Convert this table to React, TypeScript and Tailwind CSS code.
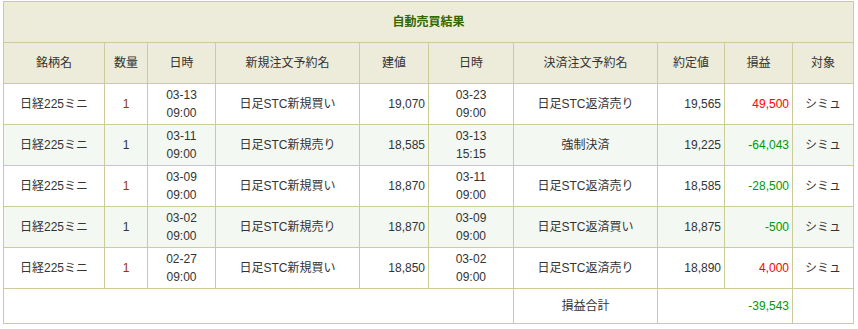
import React from "react";

type Row = {
  qtyBuy: boolean;
  d1: string;
  t1: string;
  open: string;
  price: string;
  d2: string;
  t2: string;
  close: string;
  fill: string;
  pl: string;
  plPos: boolean;
};

const rows: Row[] = [
  { qtyBuy: true, d1: "03-13", t1: "09:00", open: "日足STC新規買い", price: "19,070", d2: "03-23", t2: "09:00", close: "日足STC返済売り", fill: "19,565", pl: "49,500", plPos: true },
  { qtyBuy: false, d1: "03-11", t1: "09:00", open: "日足STC新規売り", price: "18,585", d2: "03-13", t2: "15:15", close: "強制決済", fill: "19,225", pl: "-64,043", plPos: false },
  { qtyBuy: true, d1: "03-09", t1: "09:00", open: "日足STC新規買い", price: "18,870", d2: "03-11", t2: "09:00", close: "日足STC返済売り", fill: "18,585", pl: "-28,500", plPos: false },
  { qtyBuy: false, d1: "03-02", t1: "09:00", open: "日足STC新規売り", price: "18,870", d2: "03-09", t2: "09:00", close: "日足STC返済買い", fill: "18,875", pl: "-500", plPos: false },
  { qtyBuy: true, d1: "02-27", t1: "09:00", open: "日足STC新規買い", price: "18,850", d2: "03-02", t2: "09:00", close: "日足STC返済売り", fill: "18,890", pl: "4,000", plPos: true },
];

const cell = "border border-[#cccc99] px-[3px] py-0 align-middle";

export default function App() {
  return (
    <div
      className="pl-[3px] pt-[1px] bg-white text-[12px] leading-[18px] text-[#333]"
      style={{ fontFamily: '"Liberation Sans", Arial, "Noto Sans CJK JP", sans-serif' }}
    >
      <table className="border-collapse table-fixed w-[850px]">
        <colgroup>
          <col className="w-[101px]" />
          <col className="w-[43px]" />
          <col className="w-[68px]" />
          <col className="w-[144px]" />
          <col className="w-[69px]" />
          <col className="w-[85px]" />
          <col className="w-[144px]" />
          <col className="w-[67px]" />
          <col className="w-[68px]" />
          <col className="w-[61px]" />
        </colgroup>
        <thead>
          <tr className="h-[41px] bg-[#edebd9]">
            <th colSpan={10} className={`${cell} text-center font-bold text-[#336600]`}>
              自動売買結果
            </th>
          </tr>
          <tr className="h-[41px] bg-[#edebd9]">
            {["銘柄名", "数量", "日時", "新規注文予約名", "建値", "日時", "決済注文予約名", "約定値", "損益", "対象"].map(
              (h, i) => (
                <th key={i} className={`${cell} text-center font-normal`}>
                  {h}
                </th>
              )
            )}
          </tr>
        </thead>
        <tbody>
          {rows.map((r, i) => (
            <tr key={i} className={`h-[41px] ${i % 2 === 1 ? "bg-[#f3f8f2]" : "bg-white"}`}>
              <td className={`${cell} text-center`}>日経225ミニ</td>
              <td className={`${cell} text-center ${r.qtyBuy ? "text-[#993300]" : "text-[#333]"}`}>1</td>
              <td className={`${cell} text-center`}>
                {r.d1}
                <br />
                {r.t1}
              </td>
              <td className={`${cell} text-center`}>{r.open}</td>
              <td className={`${cell} text-right`}>{r.price}</td>
              <td className={`${cell} text-center`}>
                {r.d2}
                <br />
                {r.t2}
              </td>
              <td className={`${cell} text-center`}>{r.close}</td>
              <td className={`${cell} text-right`}>{r.fill}</td>
              <td className={`${cell} text-right ${r.plPos ? "text-[#ff0000]" : "text-[#009900]"}`}>{r.pl}</td>
              <td className={`${cell} text-center`}>シミュ</td>
            </tr>
          ))}
          <tr className="h-[35px] bg-white">
            <td colSpan={6} className={cell}></td>
            <td className={`${cell} text-center`}>損益合計</td>
            <td colSpan={2} className={`${cell} text-right text-[#009900]`}>-39,543</td>
            <td className={cell}></td>
          </tr>
        </tbody>
      </table>
    </div>
  );
}
